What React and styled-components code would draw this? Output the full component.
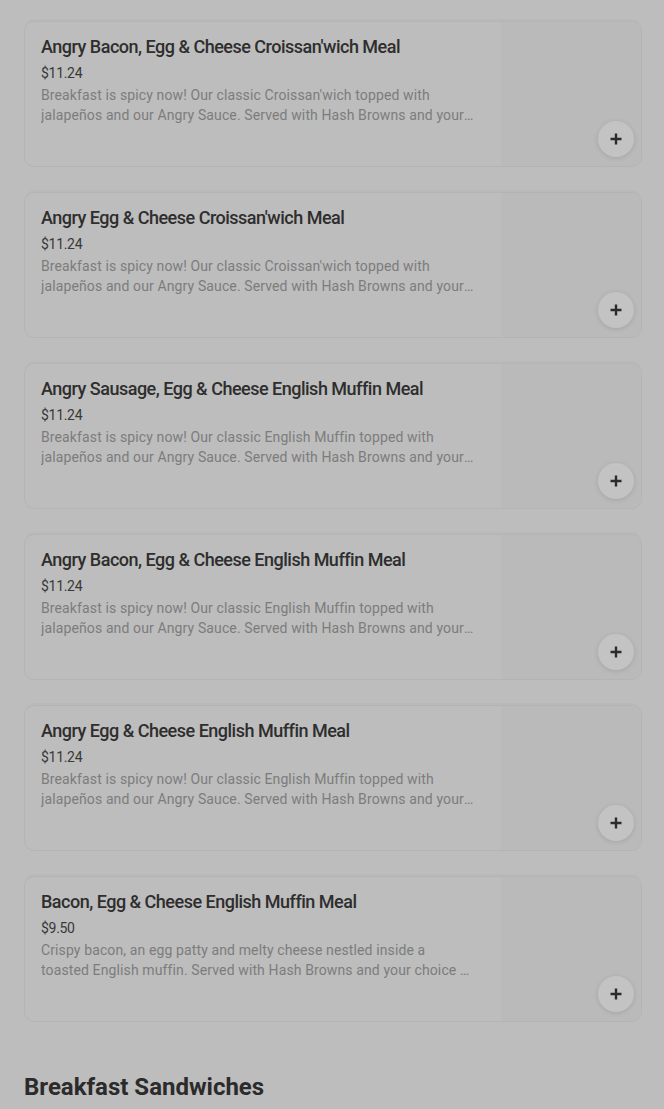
import React from "react";
import styled, { createGlobalStyle } from "styled-components";

const GlobalStyle = createGlobalStyle`
  body {
    margin: 0;
    background: #bdbdbd;
    font-family: Roboto, "Liberation Sans", sans-serif;
  }
`;

const Page = styled.div`
  display: flex;
  flex-direction: column;
  gap: 25px;
  padding: 21px 22px 0 24px;
  height: 1109px;
  overflow: hidden;
  box-sizing: border-box;
`;

const Card = styled.div`
  display: flex;
  flex-direction: row;
  height: 146px;
  flex-shrink: 0;
  border: 1px solid #b4b4b4;
  border-radius: 10px;
  box-shadow: 0 -3px 0 -1px #b9b9b9;
  box-sizing: border-box;
  overflow: hidden;
`;

const Info = styled.div`
  flex: 1;
  display: flex;
  flex-direction: column;
  padding: 13px 16px 0 16px;
  min-width: 0;
`;

const Title = styled.div`
  font-size: 18px;
  line-height: 24px;
  font-weight: 500;
  letter-spacing: -0.5px;
  color: #2e2e2e;
`;

const Price = styled.div`
  font-size: 14px;
  line-height: 20px;
  color: #383838;
  letter-spacing: -0.3px;
  margin-top: 4px;
`;

const Desc = styled.div`
  font-size: 14px;
  line-height: 20px;
  color: #7c7c7c;
  letter-spacing: 0.12px;
  margin-top: 2px;
  max-width: 433px;
  display: -webkit-box;
  -webkit-line-clamp: 2;
  -webkit-box-orient: vertical;
  overflow: hidden;
`;

const ImageArea = styled.div`
  width: 140px;
  flex-shrink: 0;
  background: #bababa;
  display: flex;
  align-items: flex-end;
  justify-content: flex-end;
  padding: 0 7px 8px 0;
  box-sizing: border-box;
`;

const AddButton = styled.div`
  width: 36px;
  height: 36px;
  border-radius: 50%;
  background: #c3c3c3;
  box-shadow: 0 1px 5px rgba(0, 0, 0, 0.12);
  display: flex;
  align-items: center;
  justify-content: center;
  margin-bottom: 1px;
`;

const SectionTitle = styled.h2`
  margin: 24px 0 0 0;
  font-size: 24px;
  line-height: 32px;
  font-weight: 700;
  color: #2b2b2b;
`;

const items = [
  {
    name: "Angry Bacon, Egg & Cheese Croissan'wich Meal",
    price: "$11.24",
    desc: "Breakfast is spicy now! Our classic Croissan'wich topped with jalapeños and our Angry Sauce. Served with Hash Browns and your choice of a drink.",
  },
  {
    name: "Angry Egg & Cheese Croissan'wich Meal",
    price: "$11.24",
    desc: "Breakfast is spicy now! Our classic Croissan'wich topped with jalapeños and our Angry Sauce. Served with Hash Browns and your choice of a drink.",
  },
  {
    name: "Angry Sausage, Egg & Cheese English Muffin Meal",
    price: "$11.24",
    desc: "Breakfast is spicy now! Our classic English Muffin topped with jalapeños and our Angry Sauce. Served with Hash Browns and your choice of a drink.",
  },
  {
    name: "Angry Bacon, Egg & Cheese English Muffin Meal",
    price: "$11.24",
    desc: "Breakfast is spicy now! Our classic English Muffin topped with jalapeños and our Angry Sauce. Served with Hash Browns and your choice of a drink.",
  },
  {
    name: "Angry Egg & Cheese English Muffin Meal",
    price: "$11.24",
    desc: "Breakfast is spicy now! Our classic English Muffin topped with jalapeños and our Angry Sauce. Served with Hash Browns and your choice of a drink.",
  },
  {
    name: "Bacon, Egg & Cheese English Muffin Meal",
    price: "$9.50",
    desc: "Crispy bacon, an egg patty and melty cheese nestled inside a toasted English muffin. Served with Hash Browns and your choice of a drink.",
  },
];

const PlusIcon = () => (
  <svg width="12" height="12" viewBox="0 0 12 12">
    <path d="M6 0.5v11M0.5 6h11" stroke="#2b2b2b" strokeWidth="2.4" />
  </svg>
);

const App = () => (
  <>
    <GlobalStyle />
    <Page>
      {items.map((item) => (
        <Card key={item.name}>
          <Info>
            <Title>{item.name}</Title>
            <Price>{item.price}</Price>
            <Desc>{item.desc}</Desc>
          </Info>
          <ImageArea>
            <AddButton>
              <PlusIcon />
            </AddButton>
          </ImageArea>
        </Card>
      ))}
      <SectionTitle>Breakfast Sandwiches</SectionTitle>
    </Page>
  </>
);

export default App;
